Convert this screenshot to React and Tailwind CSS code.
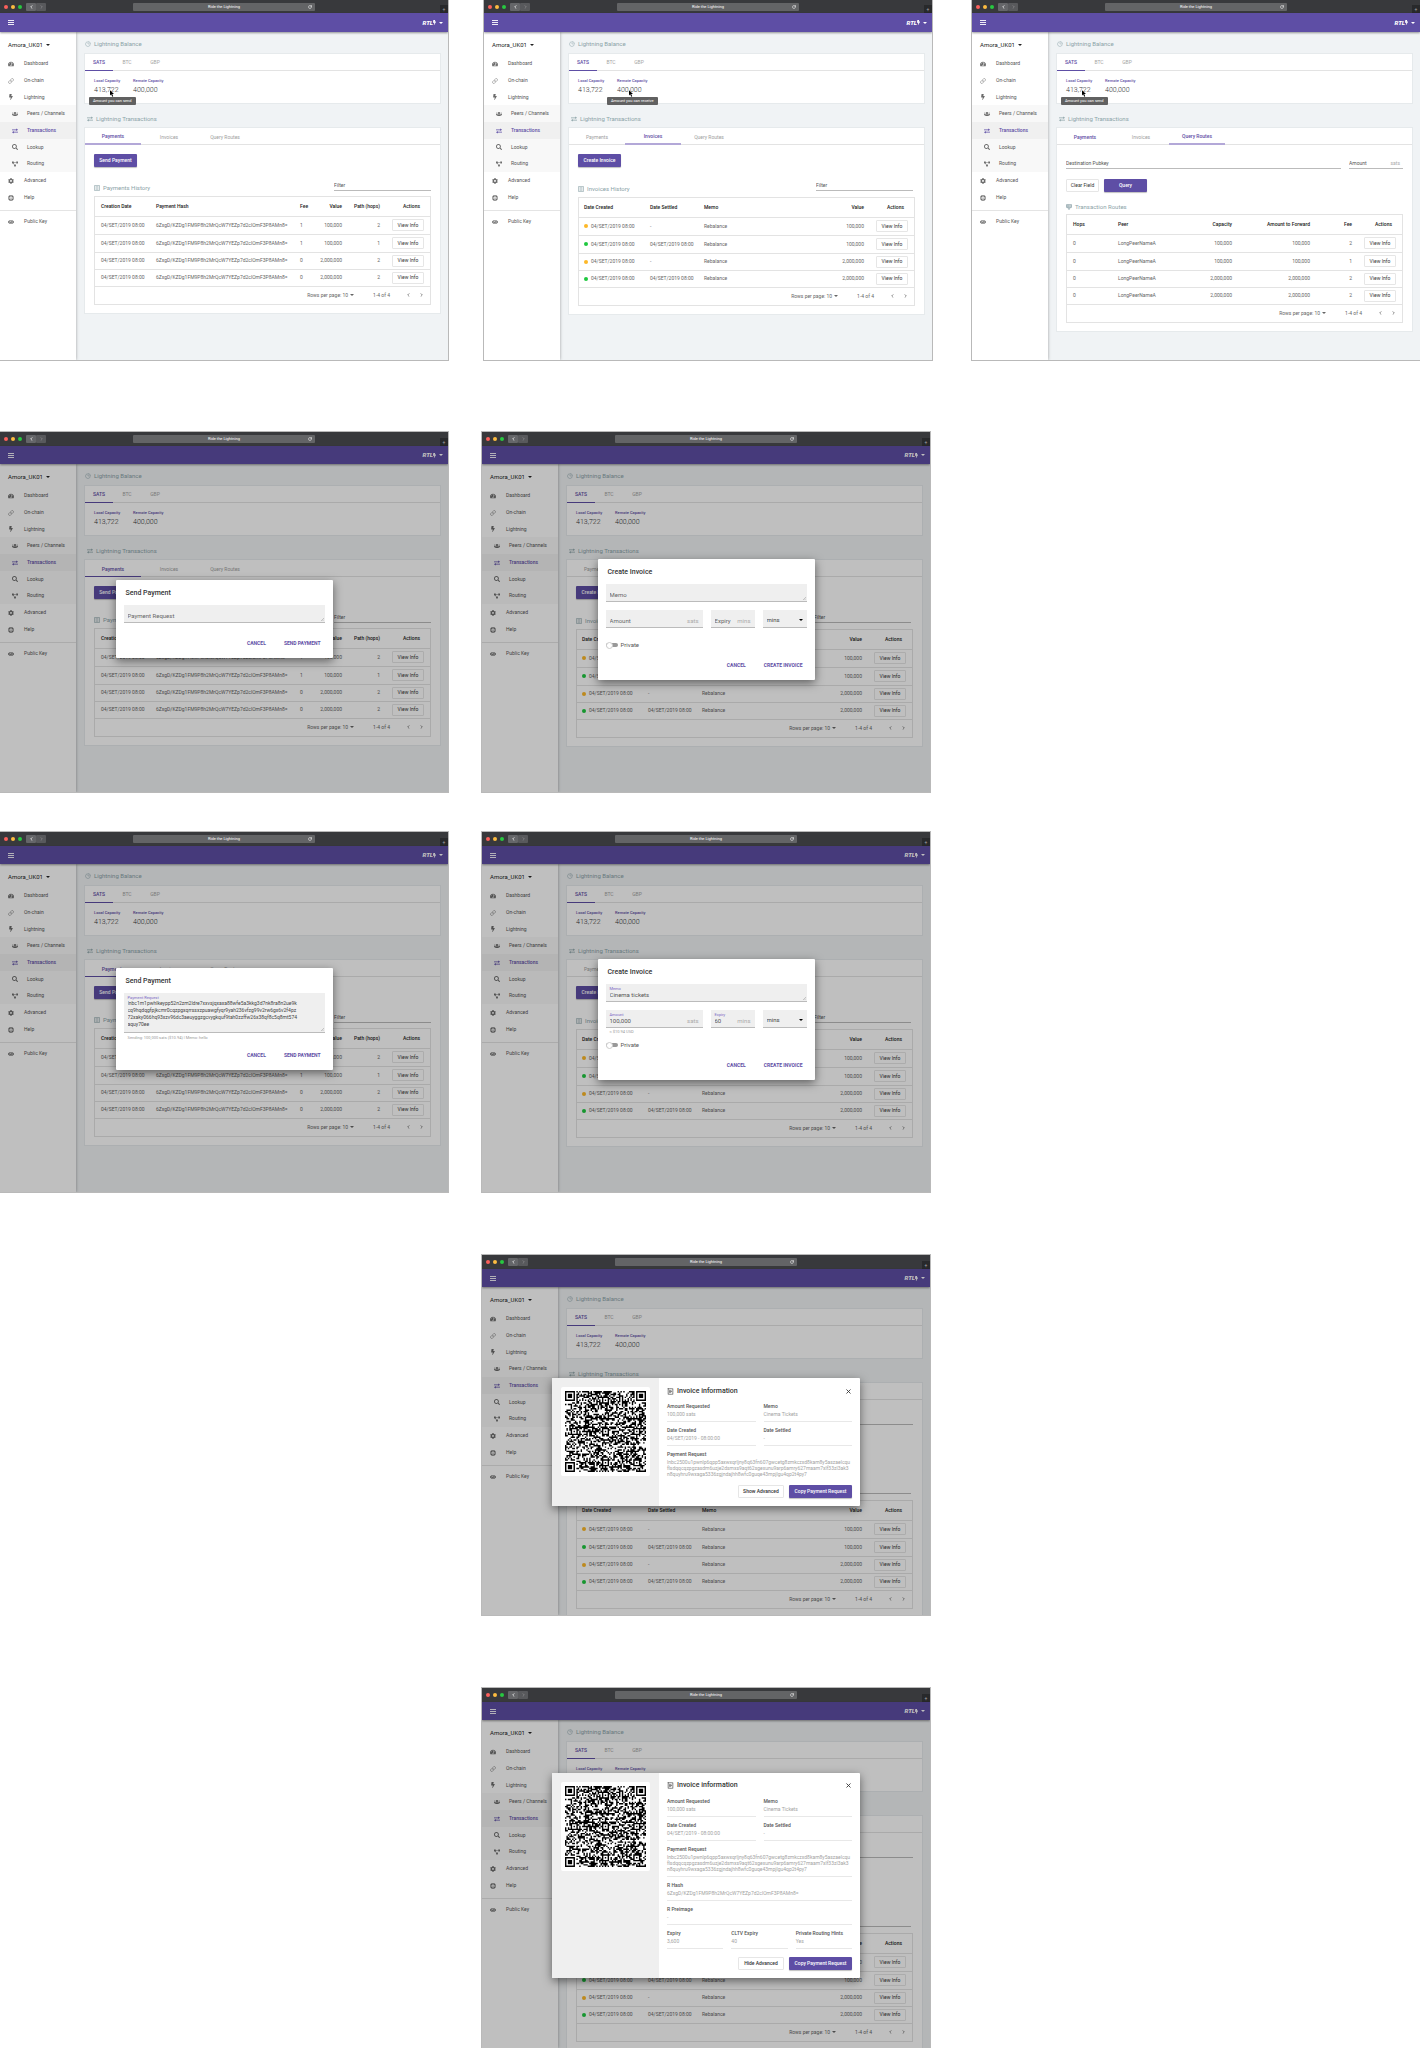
import React from "react";
import {
  FaTachometerAlt, FaBolt, FaUsers, FaSearch,
  FaProjectDiagram, FaCog, FaEye, FaRegLifeRing,
} from "react-icons/fa";
import { LuReceiptText, LuX, LuRotateCw, LuChartPie, LuLink } from "react-icons/lu";

const HASH = "6ZxgD/KZDg1FM9P8h2MrQcW7YEZp7d2clOmF3P8AMn8=";
const REQUEST_LINES = [
  "lnbc2500u1pwnlp6qpp5axwxqrljny8q63fn607gwcetg8zmkczxd8kam8y5aszaelcqu",
  "flsdqqcqzpgzasdm6uzje2dsmxs9aqt62sgexunu9arp6amry627maam7xlf33zl3ak3",
  "n8quyhru9wxaga5336zgjndajhh8wfc0guqe43mpjlgu4qp2t4py7",
];

function SwapIcon({ className = "" }) {
  return (
    <svg viewBox="0 0 12 12" className={className} fill="currentColor" aria-hidden="true">
      <path d="M0 3h8.500V1L12 3.700 8.500 6.200V4.300H0zM12 7.700H3.500V5.800L0 8.400 3.500 11V9H12z" />
    </svg>
  );
}

function RoutesIcon({ className = "" }) {
  return (
    <svg viewBox="0 0 12 12" className={className} fill="none" stroke="currentColor" strokeWidth="1.300" aria-hidden="true">
      <path d="M1 1h10v3H1zM1 4h10v3H1zM6 7v4M3 7l3 4 3-4M3 2.500h2M3 5.500h2" />
    </svg>
  );
}

function ListIcon({ className = "" }) {
  return (
    <svg viewBox="0 0 12 12" className={className} fill="none" stroke="currentColor" strokeWidth="1.200" aria-hidden="true">
      <path d="M1 1h10v10H1zM3 3.500h6M3 6h6M3 8.500h6" />
    </svg>
  );
}

function Caret({ className = "" }) {
  return (
    <svg viewBox="0 0 8 4" className={`h-[2px] w-1 shrink-0 ${className}`} fill="currentColor" aria-hidden="true">
      <path d="M0 0h8L4 4z" />
    </svg>
  );
}

function Chevron({ left }) {
  return (
    <svg viewBox="0 0 6 10" className="h-1 w-[3px]" fill="none" stroke="currentColor" strokeWidth="1.800" aria-hidden="true">
      <path d={left ? "M5 1L1 5l4 4" : "M1 1l4 4-4 4"} />
    </svg>
  );
}

function TitleBar({ cropped }) {
  return (
    <div className={`${cropped ? "h-[13px]" : "h-[14px]"} relative flex items-center bg-[#38393c] pl-1`}>
      <div className="flex gap-[3px]">
        <span className="size-1 rounded-full bg-[#fc605b]" />
        <span className="size-1 rounded-full bg-[#fdbc40]" />
        <span className="size-1 rounded-full bg-[#28c840]" />
      </div>
      <div className="ml-1 flex">
        <button type="button" aria-label="Back" className="flex h-2 w-[10px] items-center justify-center rounded-[1px] bg-[#656669] text-white"><Chevron left /></button>
        <button type="button" aria-label="Forward" className="flex h-2 w-[10px] items-center justify-center rounded-[1px] bg-[#58595c] text-[#8b8c8e]"><Chevron /></button>
      </div>
      <div className="absolute inset-x-0 flex justify-center">
        <div className="relative flex h-2 w-[182px] items-center justify-center rounded-[1px] bg-[#636466] text-[4px] leading-none text-white">
          Ride the Lightning
          <LuRotateCw className="absolute right-[3px] size-1" strokeWidth={3} />
        </div>
      </div>
      <button type="button" aria-label="New tab" className="absolute right-0 bottom-0 flex size-2 items-center justify-center bg-[#28292b] text-[5px] leading-none text-[#a5a5a7]">+</button>
    </div>
  );
}

function Header({ cropped }) {
  return (
    <header className={`${cropped ? "h-[19px]" : "h-[18px]"} relative z-10 flex items-center justify-between bg-[#5e4ea5] pr-[5px] pl-2 text-white shadow-[0_1px_2px_rgba(0,0,0,0.4)]`}>
      <button type="button" aria-label="Menu" className="flex w-[6px] flex-col gap-px">
        <span className="h-px bg-white/90" />
        <span className="h-px bg-white/90" />
        <span className="h-px bg-white/90" />
      </button>
      <button type="button" className="flex items-center text-[6px] leading-none font-black italic">
        RTL
        <FaBolt className="h-[5px] w-[3px]" />
        <Caret className="ml-[3px]" />
      </button>
    </header>
  );
}

function NavItem({ icon: Icon, label, sub, active, short }) {
  return (
    <a
      href="#"
      className={`flex ${short ? "h-4" : "h-[17px]"} items-center text-[5px] leading-none ${sub ? "pl-3" : "pl-2"} ${
        active ? "bg-[#f0f0f0] font-medium text-[#5e4ea5]" : sub ? "bg-[#f8f8f8] text-[#555]" : "text-[#555]"
      }`}
    >
      <Icon className={`size-[6px] ${active ? "" : "text-[#6b6b6b]"}`} />
      <span className={sub ? "ml-[9px]" : "ml-[10px]"}>{label}</span>
    </a>
  );
}

function Sidebar() {
  return (
    <nav className="relative z-[5] w-[76px] shrink-0 bg-white shadow-[0_0_3px_rgba(0,0,0,0.35)]">
      <button type="button" className="flex h-[23px] items-center pt-[2px] pl-2 text-[6px] leading-none text-[#222]">
        Amora_UK01
        <Caret className="ml-[3px]" />
      </button>
      <NavItem icon={FaTachometerAlt} label="Dashboard" />
      <NavItem icon={LuLink} label="On-chain" />
      <NavItem icon={FaBolt} label="Lightning" short />
      <NavItem icon={FaUsers} label="Peers / Channels" sub />
      <NavItem icon={SwapIcon} label="Transactions" sub active />
      <NavItem icon={FaSearch} label="Lookup" sub short />
      <NavItem icon={FaProjectDiagram} label="Routing" sub />
      <NavItem icon={FaCog} label="Advanced" />
      <NavItem icon={FaRegLifeRing} label="Help" />
      <div className="mt-1 mb-[2px] border-t border-[#e4e4e4]" />
      <NavItem icon={FaEye} label="Public Key" />
    </nav>
  );
}

function SectionTitle({ icon: Icon, children, className = "" }) {
  return (
    <h2 className={`flex items-center gap-[3px] text-[6px] leading-none text-[#8ba3a8] ${className}`}>
      <Icon className="size-[6px]" />
      {children}
    </h2>
  );
}

function Balance({ tip }) {
  return (
    <section className="h-[49px] bg-white outline outline-[#e6eaec]">
      <div className="flex border-b border-[#e3e3e3] text-[5px] leading-none">
        {["SATS", "BTC", "GBP"].map((t) => (
          <button
            key={t}
            type="button"
            className={`-mb-px h-[17px] w-7 border-b ${t === "SATS" ? "border-[#5e4ea5] font-medium text-[#5e4ea5]" : "border-transparent text-[#a5a5a5]"}`}
          >
            {t}
          </button>
        ))}
      </div>
      <dl className="flex pt-2 pl-[9px] leading-none">
        {[["Local Capacity", "413,722", "send"], ["Remote Capacity", "400,000", "receive"]].map(([k, v, verb]) => (
          <div key={k} className="relative w-[39px]">
            <dt className="text-[4px] font-medium whitespace-nowrap text-[#5e4ea5]">{k}</dt>
            <dd className="mt-1 text-[7px] font-light text-[#333]">{v}</dd>
            {tip === verb && (
              <>
                <svg viewBox="0 0 10 16" className={`absolute top-[11px] ${verb === "send" ? "left-4" : "left-3"} h-[7px] w-1`} aria-hidden="true">
                  <path d="M0 0v13l3-3 2.500 6 2.500-1-2.500-5.500H10z" fill="#000" />
                </svg>
                <span role="tooltip" className={`absolute top-[18px] ${verb === "send" ? "-left-[5px]" : "-left-[10px]"} rounded-[1px] bg-[#616161] px-1 py-[2px] text-[4px] leading-[4px] whitespace-nowrap text-white`}>
                  Amount you can {verb}
                </span>
              </>
            )}
          </div>
        ))}
      </dl>
    </section>
  );
}

const TABS = ["Payments", "Invoices", "Query Routes"];

function Tabs({ tab, soft }) {
  return (
    <div className="flex h-[17px] border-b border-[#e3e3e3] text-[5px] leading-none">
      {TABS.map((t) => {
        const on = t === tab || (t === "Payments" && tab === "Query Routes");
        const line = t !== tab ? "border-b border-transparent" : soft ? "border-b-2 border-[#b3a8d8]" : "border-b border-[#5e4ea5]";
        return (
          <button key={t} type="button" className={`-mb-px w-14 pt-[2px] ${line} ${on ? "font-medium text-[#5e4ea5]" : "text-[#a0a0a0]"}`}>
            {t}
          </button>
        );
      })}
    </div>
  );
}

function Primary({ children, className = "" }) {
  return (
    <button type="button" className={`block h-[13px] rounded-[1px] bg-[#5e4ea5] text-[5px] leading-none font-medium whitespace-nowrap text-white shadow-[0_1px_1px_rgba(0,0,0,0.25)] ${className}`}>
      {children}
    </button>
  );
}

function Outline({ children, className = "" }) {
  return (
    <button type="button" className={`block rounded-[1px] border border-[#e6e6e6] bg-transparent text-[5px] leading-none whitespace-nowrap text-[#333] ${className}`}>
      {children}
    </button>
  );
}

function Filter() {
  return (
    <input aria-label="Filter" placeholder="Filter" className="h-[10px] w-[97px] border-b border-[#bbb] bg-transparent pb-px text-[5px] leading-none outline-none placeholder:text-[#555]" />
  );
}

function TableBox({ cols, heads, rows }) {
  return (
    <div className="border border-[#e3e3e3] text-[#666]">
      <table className="w-full table-fixed border-collapse text-[5px] leading-none">
        <colgroup>
          {cols.map((c, i) => <col key={i} className={c} />)}
          <col className="w-[50px]" />
        </colgroup>
        <thead>
          <tr className="h-[19px] border-b border-[#e3e3e3] text-[#222]">
            {heads.map(([h, cls]) => <th key={h} className={`p-0 font-medium whitespace-nowrap ${cls}`}>{h}</th>)}
            <th className="p-0 pr-[10px] text-right font-medium">Actions</th>
          </tr>
        </thead>
        <tbody>
          {rows.map((r, i) => (
            <tr key={i} className={`${i < 2 ? "h-[18px]" : "h-[17px]"} border-b border-[#e3e3e3]`}>
              {r.map((c, j) => <td key={j} className={`p-0 whitespace-nowrap ${heads[j][1]}`}>{c}</td>)}
              <td className="p-0 pr-[6px]">
                <Outline className="ml-auto h-3 w-8">View Info</Outline>
              </td>
            </tr>
          ))}
        </tbody>
      </table>
      <div className="flex h-[17px] items-center justify-end pr-[7px] text-[5px] leading-none">
        <span>Rows per page: 10</span>
        <Caret className="mr-[19px] ml-[2px]" />
        <span className="mr-[17px]">1-4 of 4</span>
        <button type="button" aria-label="Previous page" className="mr-[10px]"><Chevron left /></button>
        <button type="button" aria-label="Next page"><Chevron /></button>
      </div>
    </div>
  );
}

function Payments() {
  return (
    <div className="px-[9px] pt-[9px] pb-2">
      <Primary className="w-[43px]">Send Payment</Primary>
      <div className="mt-[14px] flex h-[15px] items-start justify-between">
        <SectionTitle icon={ListIcon} className="mt-1">Payments History</SectionTitle>
        <Filter />
      </div>
      <TableBox
        cols={["w-[61px]", "", "w-[15px]", "w-[27px]", "w-[38px]"]}
        heads={[["Creation Date", "pl-[6px] text-left"], ["Payment Hash", "text-left"], ["Fee", "text-left"], ["Value", "text-right"], ["Path (hops)", "text-right"]]}
        rows={[["1", "100,000", "2"], ["1", "100,000", "1"], ["0", "2,000,000", "2"], ["0", "2,000,000", "2"]].map((r) => ["04/SET/2019 08:00", HASH, ...r])}
      />
    </div>
  );
}

function Invoices({ expanded }) {
  const date = "04/SET/2019 08:00";
  const dated = (color) => (
    <span className="flex items-center gap-[3px]">
      <span className={`size-1 rounded-full ${color}`} />
      {date}
    </span>
  );
  const wait = dated("bg-[#fdb827]");
  const done = dated("bg-[#1fc83f]");
  return (
    <div className={`px-[9px] pb-2 ${expanded ? "pt-6" : "pt-[9px]"}`}>
      {expanded ? <div className="mb-[59px] border-b border-[#bbb]" /> : <Primary className="w-[43px]">Create Invoice</Primary>}
      <div className={`flex h-4 items-start justify-between pr-[2px] ${expanded ? "mt-1" : "mt-[14px]"}`}>
        <SectionTitle icon={ListIcon} className="mt-[5px]">Invoices History</SectionTitle>
        <Filter />
      </div>
      <TableBox
        cols={["w-[71px]", "w-[54px]", "", "w-[60px]"]}
        heads={[["Date Created", "pl-[5px] text-left"], ["Date Settled", "text-left"], ["Memo", "text-left"], ["Value", "text-right"]]}
        rows={[[wait, "-", "Rebalance", "100,000"], [done, date, "Rebalance", "100,000"], [wait, "-", "Rebalance", "2,000,000"], [done, date, "Rebalance", "2,000,000"]]}
      />
    </div>
  );
}

function QueryRoutes() {
  return (
    <div className="px-[9px] pt-[14px] pb-2">
      <div className="flex gap-2 text-[5px] leading-none text-[#555]">
        <input aria-label="Destination Pubkey" placeholder="Destination Pubkey" className="h-[10px] min-w-0 flex-1 border-b border-[#bbb] pb-px outline-none placeholder:text-[#555]" />
        <label className="flex h-[10px] w-[54px] items-center border-b border-[#bbb] pr-[3px] pb-px">
          <input aria-label="Amount" placeholder="Amount" className="min-w-0 flex-1 outline-none placeholder:text-[#555]" />
          <span className="text-[#aaa]">sats</span>
        </label>
      </div>
      <div className="mt-[10px] flex gap-[5px]">
        <Outline className="h-[13px] w-[33px]">Clear Field</Outline>
        <Primary className="w-[43px]">Query</Primary>
      </div>
      <SectionTitle icon={RoutesIcon} className="mt-3 mb-1">Transaction Routes</SectionTitle>
      <TableBox
        cols={["w-[51px]", "", "w-[46px]", "w-[78px]", "w-[42px]"]}
        heads={[["Hops", "pl-[6px] text-left"], ["Peer", "text-left"], ["Capacity", "text-right"], ["Amount to Forward", "text-right"], ["Fee", "text-right"]]}
        rows={[["100,000", "2"], ["100,000", "1"], ["2,000,000", "2"], ["2,000,000", "2"]].map(([v, f]) => ["0", "LongPeerNameA", v, v, f])}
      />
    </div>
  );
}

function Frame({ tab, tip, cropped, expanded, modal }) {
  return (
    <article className="relative flex min-h-[360px] min-w-0 flex-col overflow-hidden outline outline-[#b9b9b9]">
      <TitleBar cropped={cropped} />
      <div className="relative flex flex-1 flex-col">
        <Header cropped={cropped} />
        <div className="flex flex-1">
          <Sidebar />
          <main className="min-w-0 flex-1 bg-[#f0f3f5] pr-2 pl-[9px]">
            <SectionTitle icon={LuChartPie} className="h-[22px] pt-[2px]">Lightning Balance</SectionTitle>
            <Balance tip={tip} />
            <SectionTitle icon={SwapIcon} className="h-[25px] pt-[7px] pl-[2px]">Lightning Transactions</SectionTitle>
            <section className="-mb-20 bg-white outline outline-[#e6eaec]">
              <Tabs tab={tab} soft={cropped} />
              {tab === "Payments" ? <Payments /> : tab === "Invoices" ? <Invoices expanded={expanded} /> : <QueryRoutes />}
            </section>
          </main>
        </div>
        {modal && <div className="absolute inset-0 z-20 flex items-center justify-center bg-black/25">{modal}</div>}
      </div>
    </article>
  );
}

function Dialog({ title, action, children }) {
  return (
    <div role="dialog" aria-label={title} className="w-[217px] rounded-[1px] bg-white px-2 pt-[9px] pb-3 shadow-[0_3px_10px_rgba(0,0,0,0.5)]">
      <h3 className="pl-[2px] text-[7px] leading-[8px] font-medium text-[#333]">{title}</h3>
      {children}
      <div className="flex justify-end gap-[18px] pr-1 text-[5px] leading-[5px] font-bold text-[#5e4ea5]">
        <button type="button">CANCEL</button>
        <button type="button">{action}</button>
      </div>
    </div>
  );
}

function Field({ label, value, unit, area, className = "" }) {
  const Tag = area ? "textarea" : "input";
  return (
    <label className={`relative flex flex-col justify-end border-b border-[#bbb] bg-[#efefef] px-1 pb-[3px] text-[6px] leading-[7px] text-[#555] ${className}`}>
      {value && <span className="text-[4px] leading-[5px] text-[#7a69c4]">{label}</span>}
      <span className="flex">
        <Tag
          aria-label={label}
          placeholder={label}
          defaultValue={value}
          rows={area ? 1 : undefined}
          className="h-[7px] min-w-0 flex-1 resize-none overflow-hidden bg-transparent outline-none placeholder:text-[#666]"
        />
        {unit && <span className="text-[6px] text-[#aaa]">{unit}</span>}
      </span>
      {area && <Grip />}
    </label>
  );
}

function Grip() {
  return (
    <svg viewBox="0 0 6 6" className="absolute right-px bottom-px size-[3px]" stroke="#999" aria-hidden="true">
      <path d="M0 6L6 0M3 6l3-3" />
    </svg>
  );
}

function SendDialog({ filled }) {
  return (
    <Dialog title="Send Payment" action="SEND PAYMENT">
      {filled ? (
        <div className="mt-2 mb-[13px]">
          <label className="relative block h-10 border-b border-[#bbb] bg-[#efefef] px-1 pt-[3px]">
            <span className="block text-[4px] leading-[4px] text-[#7a69c4]">Payment Request</span>
            <textarea
              rows={4}
              className="block h-7 w-full resize-none overflow-hidden bg-transparent text-[5px] leading-[7px] whitespace-pre text-[#444] outline-none"
              defaultValue={"lnbc1m1pwhlkeypp52n2zm2ldre7xxvsjqxaxa88wfe5a3kkg3d7nk8ra8n2ue9k\ncq9hqdqgfpjkcmr0cqzpgxqrrssxzpuawgfyqr9yah236vfzg99v2rw6gx6v2f4pz\n72xaky066hq93xzv96dc3aeuyggzgcvygkquf9tah0zzffw26x38qf8c5q8mt574\naquy70ee"}
            />
            <Grip />
          </label>
          <p className="mt-[3px] pl-1 text-[4px] leading-[4px] text-[#999]">Sending: 100,000 sats ($10.94) | Memo: hello</p>
        </div>
      ) : (
        <Field label="Payment Request" area className="mt-2 mb-[18px] h-[18px]" />
      )}
    </Dialog>
  );
}

function InvoiceDialog({ filled }) {
  return (
    <Dialog title="Create Invoice" action="CREATE INVOICE">
      <Field label="Memo" area value={filled ? "Cinema tickets" : undefined} className="mt-2 h-[18px]" />
      <div className="mt-2 flex gap-2">
        <Field label="Amount" unit="sats" value={filled ? "100,000" : undefined} className="h-[18px] min-w-0 flex-1" />
        <Field label="Expiry" unit="mins" value={filled ? "60" : undefined} className="h-[18px] w-11" />
        <div className="flex h-[18px] w-11 items-center border-b border-[#bbb] bg-[#efefef] px-1 pt-[3px]">
          <select aria-label="Unit" className="min-w-0 flex-1 appearance-none bg-transparent text-[6px] leading-[7px] text-[#444] outline-none">
            <option>mins</option>
          </select>
          <Caret />
        </div>
      </div>
      <p className="h-[14px] pt-[2px] pl-1 text-[4px] leading-[4px] text-[#999]">{filled ? "≈ $10.94 USD" : ""}</p>
      <label className="mb-[14px] flex h-[7px] items-center text-[6px] leading-none text-[#555]">
        <input type="checkbox" role="switch" className="peer sr-only" />
        <span className="relative mr-[3px] flex h-1 w-3 items-center rounded-full bg-[#999]">
          <span className="-my-px size-[7px] rounded-full border border-[#ccc] bg-white" />
        </span>
        Private
      </label>
    </Dialog>
  );
}

const QR_SIZE = 57;

function buildQr() {
  let seed = 20190904;
  const rand = () => {
    seed = (seed * 1103515245 + 12345) % 2147483648;
    return seed / 2147483648;
  };
  const grid = Array.from({ length: QR_SIZE }, () => Array.from({ length: QR_SIZE }, () => rand() < 0.5));
  const ring = (cx, cy, r, dark) => {
    for (let y = -r; y <= r; y++) {
      for (let x = -r; x <= r; x++) {
        const d = Math.max(Math.abs(x), Math.abs(y));
        if (grid[cy + y] && cx + x >= 0 && cx + x < QR_SIZE) grid[cy + y][cx + x] = dark(d);
      }
    }
  };
  for (let i = 0; i < QR_SIZE; i++) {
    grid[6][i] = i % 2 === 0;
    grid[i][6] = i % 2 === 0;
  }
  [[28, 6], [6, 28], [28, 28], [50, 28], [28, 50], [50, 50]].forEach(([x, y]) => ring(x, y, 2, (d) => d !== 1));
  [[3, 3], [53, 3], [3, 53]].forEach(([x, y]) => ring(x, y, 4, (d) => d < 2 || d === 3));
  return grid.map((row, y) => row.map((on, x) => (on ? `M${x} ${y}h1v1h-1z` : "")).join("")).join("");
}

const QR_PATH = buildQr();

function Detail({ label, children, last, className = "" }) {
  return (
    <div className={`min-w-0 pt-[6px] text-[5px] ${last ? "" : "border-b border-[#e8e8e8]"} ${className}`}>
      <dt className="leading-[5px] font-medium text-[#555]">{label}</dt>
      <dd className="mt-[2px] pb-1 leading-[6px] whitespace-nowrap text-[#a3a3a3]">{children}</dd>
    </div>
  );
}

function InvoiceInfo({ advanced }) {
  return (
    <div role="dialog" aria-label="Invoice information" className="flex w-[308px] overflow-hidden rounded-[1px] bg-white shadow-[0_3px_10px_rgba(0,0,0,0.5)]">
      <div className="w-[107px] shrink-0 bg-[#efefef] p-[9px]">
        <div className="rounded-[2px] bg-white p-1">
          <svg viewBox="0 0 57 57" className="block w-full" role="img" aria-label="Invoice QR code">
            <path d={QR_PATH} fill="#000" />
          </svg>
        </div>
      </div>
      <div className="min-w-0 flex-1 px-2 pt-[9px] pb-2">
        <div className="flex h-2 items-center text-[#333]">
          <LuReceiptText className="size-[7px]" />
          <h3 className="ml-[3px] flex-1 text-[7px] leading-none font-medium">Invoice information</h3>
          <button type="button" aria-label="Close"><LuX className="size-[7px]" strokeWidth={3} /></button>
        </div>
        <dl>
          <div className="mt-[3px] grid grid-cols-2 gap-x-2">
            <Detail label="Amount Requested">100,000 sats</Detail>
            <Detail label="Memo">Cinema Tickets</Detail>
            <Detail label="Date Created">04/SET/2019 - 08:00:00</Detail>
            <Detail label="Date Settled">-</Detail>
          </div>
          <Detail label="Payment Request" last={!advanced}>
            {REQUEST_LINES.map((l) => <span key={l} className="block">{l}</span>)}
          </Detail>
          {advanced && (
            <>
              <Detail label="R Hash">{HASH}</Detail>
              <Detail label="R Preimage">-</Detail>
              <div className="grid grid-cols-3 gap-x-2">
                <Detail label="Expiry">3,600</Detail>
                <Detail label="CLTV Expiry">40</Detail>
                <Detail label="Private Routing Hints">Yes</Detail>
              </div>
            </>
          )}
        </dl>
        <div className={`flex justify-end gap-[5px] ${advanced ? "mt-2" : "mt-1"}`}>
          <Outline className="h-[13px] w-[46px] font-medium">{advanced ? "Hide Advanced" : "Show Advanced"}</Outline>
          <Primary className="w-[63px]">Copy Payment Request</Primary>
        </div>
      </div>
    </div>
  );
}

export default function App() {
  return (
    <div className="overflow-hidden bg-white font-['Roboto','Liberation_Sans',sans-serif]">
      <div className="grid grid-cols-[1fr_36px_1fr_40px_1fr]">
        <Frame tab="Payments" tip="send" cropped />
        <div />
        <Frame tab="Invoices" tip="receive" cropped />
        <div />
        <Frame tab="Query Routes" tip="send" cropped />
      </div>
      <div className="mt-[72px] grid grid-cols-[1fr_34px_1fr_42px_1fr]">
        <Frame tab="Payments" modal={<SendDialog />} />
        <div />
        <Frame tab="Invoices" modal={<InvoiceDialog />} />
      </div>
      <div className="mt-10 grid grid-cols-[1fr_34px_1fr_42px_1fr]">
        <Frame tab="Payments" modal={<SendDialog filled />} />
        <div />
        <Frame tab="Invoices" modal={<InvoiceDialog filled />} />
      </div>
      <div className="mt-[63px] grid grid-cols-[1fr_34px_1fr_42px_1fr]">
        <div className="col-span-2" />
        <Frame tab="Invoices" expanded modal={<InvoiceInfo />} />
      </div>
      <div className="mt-[73px] grid grid-cols-[1fr_34px_1fr_42px_1fr]">
        <div className="col-span-2" />
        <Frame tab="Invoices" expanded modal={<InvoiceInfo advanced />} />
      </div>
    </div>
  );
}
